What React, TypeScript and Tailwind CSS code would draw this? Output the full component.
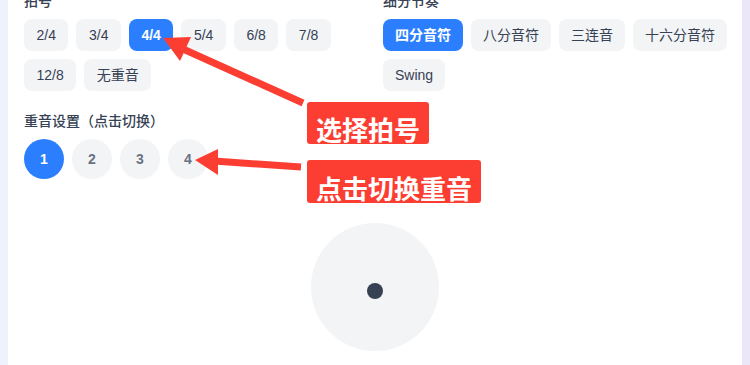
import { useState } from 'react'

const meters = ['2/4', '3/4', '4/4', '5/4', '6/8', '7/8', '12/8', '无重音']
const subdivisions = ['四分音符', '八分音符', '三连音', '十六分音符', 'Swing']

export default function App() {
  const [meter, setMeter] = useState('4/4')
  const [sub, setSub] = useState('四分音符')
  const [accents, setAccents] = useState<boolean[]>([true, false, false, false])

  const toggleAccent = (i: number) => {
    setAccents(prev => prev.map((a, idx) => (idx === i ? !a : a)))
  }

  return (
    <div
      className="relative h-[365px] overflow-hidden bg-gradient-to-r from-[#eef2fd] to-[#ece6f9] px-2"
      style={{ fontFamily: '"Liberation Sans", "Noto Sans CJK SC", sans-serif' }}
    >
      <div className="-mt-[25px] min-h-[420px] bg-white px-4 pt-4">
        {/* 拍号 / 细分节奏 */}
        <div className="grid grid-cols-2 gap-4">
          <div>
            <h3 className="mb-2 text-sm font-medium leading-5 text-gray-700">拍号</h3>
            <div className="flex flex-wrap gap-2">
              {meters.map(m => (
                <button
                  key={m}
                  onClick={() => setMeter(m)}
                  className={`h-8 rounded-lg px-[12.5px] text-sm ${
                    meter === m
                      ? 'bg-blue-500 font-bold text-white'
                      : 'bg-gray-100 text-gray-700'
                  }`}
                >
                  {m}
                </button>
              ))}
            </div>
          </div>
          <div>
            <h3 className="mb-2 text-sm font-medium leading-5 text-gray-700">细分节奏</h3>
            <div className="-mr-2 flex flex-wrap gap-2">
              {subdivisions.map(s => (
                <button
                  key={s}
                  onClick={() => setSub(s)}
                  className={`h-8 rounded-lg px-3 text-sm ${
                    sub === s
                      ? 'bg-blue-500 font-bold text-white'
                      : 'bg-gray-100 text-gray-700'
                  }`}
                >
                  {s}
                </button>
              ))}
            </div>
          </div>
        </div>

        {/* 重音设置 */}
        <div className="mt-5">
          <h3 className="mb-2 text-sm font-medium leading-5 text-gray-700">
            重音设置（点击切换）
          </h3>
          <div className="flex gap-2">
            {accents.map((on, i) => (
              <button
                key={i}
                onClick={() => toggleAccent(i)}
                className={`flex h-10 w-10 items-center justify-center rounded-full text-sm font-bold ${
                  on ? 'bg-blue-500 text-white' : 'bg-gray-100 text-gray-500'
                }`}
              >
                {i + 1}
              </button>
            ))}
          </div>
        </div>

        {/* 节拍指示 */}
        <div className="mx-auto mt-11 flex h-32 w-32 items-center justify-center rounded-full bg-gray-100 pt-2">
          <div className="h-4 w-4 rounded-full bg-gray-700" />
        </div>
      </div>

      {/* annotations */}
      <svg
        className="pointer-events-none absolute left-0 top-0"
        width={750}
        height={365}
        viewBox="0 0 750 365"
      >
        <line x1={303} y1={103} x2={183} y2={49} stroke="#fc3d32" strokeWidth={7} />
        <polygon points="163,38 191,37 180,61" fill="#fc3d32" />
        <line x1={301} y1={167} x2={214} y2={161} stroke="#fc3d32" strokeWidth={7} />
        <polygon points="195,160 218,149 218,175" fill="#fc3d32" />
      </svg>
      <div
        className="absolute left-[307px] top-[102px] flex h-[42px] items-end rounded-[3px] bg-[#fc3d32] px-[9px] pb-[2px] text-[26px] font-bold leading-none text-white"
        style={{ fontFamily: '"Noto Sans CJK SC", sans-serif' }}
      >
        选择拍号
      </div>
      <div
        className="absolute left-[307px] top-[160px] flex h-[43px] items-end rounded-[3px] bg-[#fc3d32] px-[9px] pb-[2px] text-[26px] font-bold leading-none text-white"
        style={{ fontFamily: '"Noto Sans CJK SC", sans-serif' }}
      >
        点击切换重音
      </div>
    </div>
  )
}
